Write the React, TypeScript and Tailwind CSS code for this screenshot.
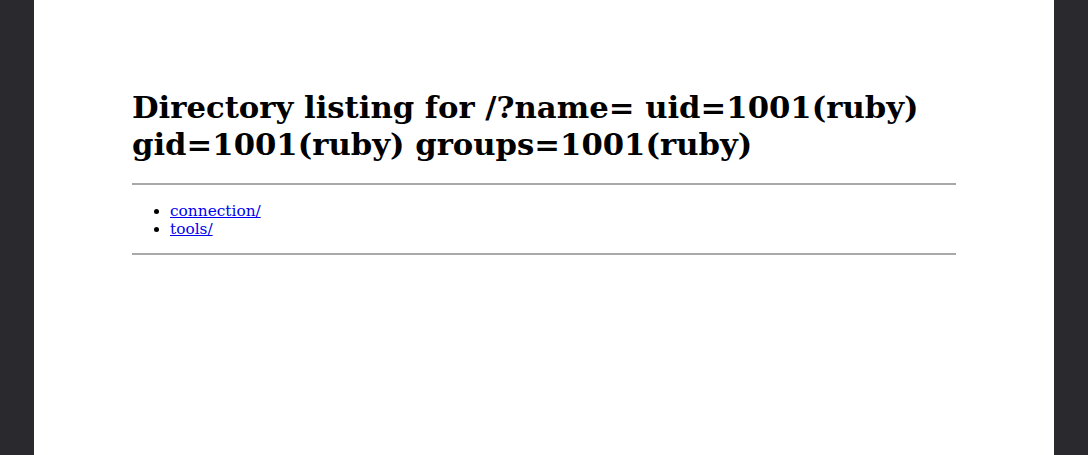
import React from 'react';

const App: React.FC = () => {
  return (
    <div className="flex min-h-[455px] h-[455px] overflow-hidden bg-[#2a2a2e]">
      <div className="w-[34px] shrink-0 bg-[#2a2a2e]" />
      <div className="flex-1 bg-white px-[98px] pt-[89px] text-black font-['DejaVu_Serif',serif]">
        <h1 className="text-[30.7px] leading-[37px] font-bold">
          Directory listing for /?name= uid=1001(ruby) gid=1001(ruby) groups=1001(ruby)
        </h1>
        <hr className="mt-[20px] border-0 border-t-2 border-[#a9a9a9]" />
        <ul className="list-disc pl-[38px] mt-[17px] mb-[15px] text-[15.36px] leading-[18px]">
          <li>
            <a href="#" className="text-[#0000ee] underline">connection/</a>
          </li>
          <li>
            <a href="#" className="text-[#0000ee] underline">tools/</a>
          </li>
        </ul>
        <hr className="border-0 border-t-2 border-[#a9a9a9]" />
      </div>
      <div className="w-[34px] shrink-0 bg-[#2a2a2e]" />
    </div>
  );
};

export default App;
